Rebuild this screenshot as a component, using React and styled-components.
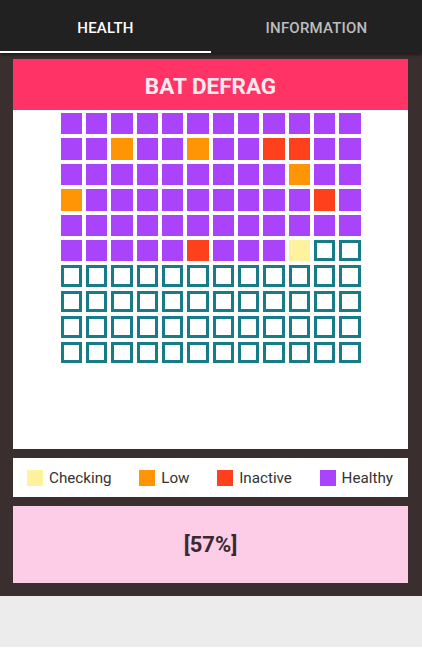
import React from "react";
import styled, { createGlobalStyle } from "styled-components";

const Global = createGlobalStyle`
  html, body { margin: 0; padding: 0; background: #ffffff; }
  * { box-sizing: border-box; }
  body { font-family: Roboto, "Noto Sans", Arial, sans-serif; }
`;

const Screen = styled.div`
  width: 422px;
  height: 647px;
  background: #ececec;
  display: flex;
  flex-direction: column;
`;

const TabBar = styled.div`
  height: 53px;
  background: #212121;
  display: flex;
  position: relative;
  z-index: 1;
  box-shadow: 0 2px 3px rgba(0, 0, 0, 0.45);
`;

const Tab = styled.div`
  flex: 1;
  display: flex;
  align-items: center;
  justify-content: center;
  padding-top: 5px;
  font-size: 15px;
  font-weight: 500;
  letter-spacing: 0.2px;
  color: ${(p) => (p.$active ? "#ffffff" : "#bdbdbd")};
  border-bottom: 2px solid ${(p) => (p.$active ? "#ffffff" : "transparent")};
`;

const Body = styled.div`
  background: #3a2f2e;
  padding: 6px 14px 13px 13px;
  display: flex;
  flex-direction: column;
`;

const Header = styled.div`
  height: 51px;
  background: #ff3366;
  color: #fde9ee;
  font-size: 22.5px;
  font-weight: 700;
  display: flex;
  align-items: center;
  justify-content: center;
  padding-top: 2px;
`;

const MapPanel = styled.div`
  height: 339px;
  background: #ffffff;
  padding-top: 3px;
  display: flex;
  justify-content: center;
`;

const Grid = styled.div`
  width: 300px;
  height: 250px;
  display: grid;
  grid-template-columns: repeat(12, 1fr);
  grid-template-rows: repeat(10, 1fr);
  gap: 4px;
`;

const COLORS = {
  h: "#aa44fb",
  l: "#ff9505",
  i: "#ff401c",
  c: "#fff29e",
};

const Cell = styled.div`
  background: ${(p) => (p.$kind === "e" ? "#ffffff" : COLORS[p.$kind])};
  border: ${(p) => (p.$kind === "e" ? "3px solid #187c88" : "none")};
`;

const Legend = styled.div`
  margin-top: 9px;
  height: 39px;
  background: #ffffff;
  display: flex;
  align-items: center;
  justify-content: space-between;
  padding: 0 15px 0 14px;
`;

const LegendItem = styled.div`
  display: flex;
  align-items: center;
  gap: 6px;
  font-size: 15.2px;
  color: #333333;
`;

const Swatch = styled.span`
  width: 16px;
  height: 16px;
  background: ${(p) => p.$color};
`;

const Score = styled.div`
  margin-top: 9px;
  height: 77px;
  background: #fdcce6;
  color: #3a2a30;
  font-size: 22px;
  font-weight: 700;
  display: flex;
  align-items: center;
  justify-content: center;
`;

const rows = [
  "hhhhhhhhhhhh",
  "hhlhhlhhiihh",
  "hhhhhhhhhlhh",
  "lhhhhhhhhhih",
  "hhhhhhhhhhhh",
  "hhhhhihhhcee",
  "eeeeeeeeeeee",
  "eeeeeeeeeeee",
  "eeeeeeeeeeee",
  "eeeeeeeeeeee",
];

const legend = [
  { label: "Checking", color: COLORS.c },
  { label: "Low", color: COLORS.l },
  { label: "Inactive", color: COLORS.i },
  { label: "Healthy", color: COLORS.h },
];

export default function App() {
  return (
    <>
      <Global />
      <Screen>
        <TabBar>
          <Tab $active>HEALTH</Tab>
          <Tab>INFORMATION</Tab>
        </TabBar>
        <Body>
          <Header>BAT DEFRAG</Header>
          <MapPanel>
            <Grid>
              {rows.map((r, ri) =>
                r.split("").map((k, ci) => <Cell key={`${ri}-${ci}`} $kind={k} />)
              )}
            </Grid>
          </MapPanel>
          <Legend>
            {legend.map((l) => (
              <LegendItem key={l.label}>
                <Swatch $color={l.color} />
                {l.label}
              </LegendItem>
            ))}
          </Legend>
          <Score>[57%]</Score>
        </Body>
      </Screen>
    </>
  );
}
